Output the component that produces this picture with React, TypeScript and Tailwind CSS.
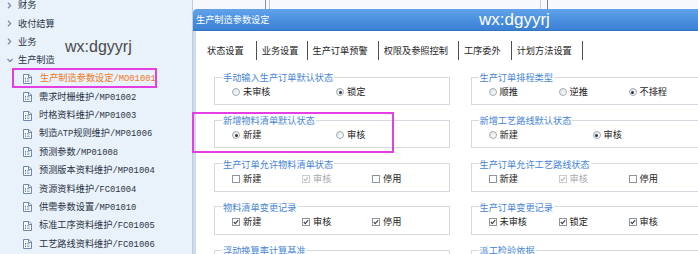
import React from "react";

const cjk = "font-['Noto_Sans_CJK_SC','Liberation_Sans',sans-serif]";

const topNodes = [
  { label: "财务", open: false },
  { label: "收付结算", open: false },
  { label: "业务", open: false },
  { label: "生产制造", open: true },
];

const leafNodes = [
  "生产制造参数设定/MO01001",
  "需求时栅维护/MP01002",
  "时格资料维护/MP01003",
  "制造ATP规则维护/MP01006",
  "预测参数/MP01008",
  "预测版本资料维护/MP01004",
  "资源资料维护/FC01004",
  "供需参数设置/MP01010",
  "标准工序资料维护/FC01005",
  "工艺路线资料维护/FC01006",
];

const tabs = ["状态设置", "业务设置", "生产订单预警", "权限及参照控制", "工序委外", "计划方法设置"];

type Item = { label: string; kind: "radio" | "check"; on?: boolean; disabled?: boolean };
type Group = { title: string; cols: 2 | 3; items: Item[] };

const leftGroups: Group[] = [
  {
    title: "手动输入生产订单默认状态",
    cols: 2,
    items: [
      { label: "未审核", kind: "radio" },
      { label: "锁定", kind: "radio", on: true },
    ],
  },
  {
    title: "新增物料清单默认状态",
    cols: 2,
    items: [
      { label: "新建", kind: "radio", on: true },
      { label: "审核", kind: "radio" },
    ],
  },
  {
    title: "生产订单允许物料清单状态",
    cols: 3,
    items: [
      { label: "新建", kind: "check" },
      { label: "审核", kind: "check", on: true, disabled: true },
      { label: "停用", kind: "check" },
    ],
  },
  {
    title: "物料清单变更记录",
    cols: 3,
    items: [
      { label: "新建", kind: "check", on: true },
      { label: "审核", kind: "check", on: true },
      { label: "停用", kind: "check", on: true },
    ],
  },
  { title: "浮动换算率计算基准", cols: 3, items: [] },
];

const rightGroups: Group[] = [
  {
    title: "生产订单排程类型",
    cols: 3,
    items: [
      { label: "顺推", kind: "radio" },
      { label: "逆推", kind: "radio" },
      { label: "不排程", kind: "radio", on: true },
    ],
  },
  {
    title: "新增工艺路线默认状态",
    cols: 2,
    items: [
      { label: "新建", kind: "radio" },
      { label: "审核", kind: "radio", on: true },
    ],
  },
  {
    title: "生产订单允许工艺路线状态",
    cols: 3,
    items: [
      { label: "新建", kind: "check" },
      { label: "审核", kind: "check", on: true, disabled: true },
      { label: "停用", kind: "check" },
    ],
  },
  {
    title: "生产订单变更记录",
    cols: 3,
    items: [
      { label: "未审核", kind: "check", on: true },
      { label: "锁定", kind: "check", on: true },
      { label: "审核", kind: "check", on: true },
    ],
  },
  { title: "派工检验依据", cols: 3, items: [] },
];

// ascii runs (codes) look like the old half-width font
function MixedText({ text }: { text: string }) {
  const parts = text.split(/([A-Za-z0-9/]+)/).filter(Boolean);
  return (
    <>
      {parts.map((p, i) =>
        /^[A-Za-z0-9/]+$/.test(p) ? (
          <span key={i} className="font-['Liberation_Mono',monospace] text-[8.8px]">
            {p}
          </span>
        ) : (
          <span key={i}>{p}</span>
        )
      )}
    </>
  );
}

function DocIcon() {
  return (
    <svg width="9" height="10" viewBox="0 0 9 10" className="shrink-0">
      <path d="M0.5 0.5h5.5l2.5 2.5v6.5h-8z" fill="#f8fbff" stroke="#7089ab" />
      <path d="M5.5 0.5v3h3" fill="none" stroke="#7089ab" />
      <path d="M2 4.5h1M2 6h1M2 7.5h1" stroke="#6580a6" />
      <path d="M4 4.5h2.5M4 6h2.5M4 7.5h2.5" stroke="#9fb1c9" />
    </svg>
  );
}

function Chevron({ open }: { open: boolean }) {
  return open ? (
    <svg width="6" height="5" viewBox="0 0 6 5">
      <path d="M0.5 1l2.5 2.5L5.5 1" fill="none" stroke="#7b8ea8" strokeWidth="1.3" />
    </svg>
  ) : (
    <svg width="5" height="7" viewBox="0 0 5 7">
      <path d="M1 0.8l2.6 2.7L1 6.2" fill="none" stroke="#7b8ea8" strokeWidth="1.3" />
    </svg>
  );
}

function Radio({ on }: { on?: boolean }) {
  return (
    <span className="w-[8px] h-[8px] rounded-full border border-[#a3a9b0] bg-gradient-to-br from-[#dfe3e7] to-white flex items-center justify-center shrink-0">
      {on && <span className="w-[3px] h-[3px] rounded-full bg-[#2e3640]" />}
    </span>
  );
}

function Check({ on, disabled }: { on?: boolean; disabled?: boolean }) {
  return (
    <span
      className={
        disabled
          ? "w-[8px] h-[8px] border border-[#c9cdd2] bg-white flex items-center justify-center shrink-0"
          : "w-[8px] h-[8px] border border-[#8e959d] bg-white flex items-center justify-center shrink-0"
      }
    >
      {on && (
        <svg width="6" height="6" viewBox="0 0 6 6">
          <path
            d="M0.8 3l1.5 1.6L5.2 1.2"
            fill="none"
            stroke={disabled ? "#b5b9be" : "#3a3f45"}
            strokeWidth="1.1"
          />
        </svg>
      )}
    </span>
  );
}

function GroupBox({ group }: { group: Group }) {
  return (
    <fieldset className="shrink-0 border border-[#d5dae0] pl-[7px] pb-[6px]">
      <legend className="px-[1px] leading-[12px] text-[#4785d6]">{group.title}</legend>
      <div className="flex items-center h-[12px] mt-[3px] pl-[10px]">
        {group.items.map((it, i) => (
          <div
            key={i}
            className={group.cols === 2 ? "w-[104px] flex items-center" : "w-[70px] flex items-center"}
          >
            {it.kind === "radio" ? <Radio on={it.on} /> : <Check on={it.on} disabled={it.disabled} />}
            <span className={it.disabled ? "ml-[3px] text-[#a7a9ac]" : "ml-[3px] text-[#1e1e1e]"}>
              {it.label}
            </span>
          </div>
        ))}
      </div>
    </fieldset>
  );
}

export default function App() {
  return (
    <div className={`relative w-[698px] h-[254px] overflow-hidden flex bg-white text-[9.2px] ${cjk}`}>
      {/* Navigation tree */}
      <aside className="relative w-[193px] h-[254px] shrink-0 bg-[#e9f1fb] border-r border-[#bccde3] overflow-hidden text-[#2b3544]">
        <div className="-mt-[4px]">
          {topNodes.map((n) => (
            <div key={n.label} className="h-[18.4px] flex items-center">
              <span className="w-[18px] pl-[7px] flex items-center">
                <Chevron open={n.open} />
              </span>
              <span>{n.label}</span>
            </div>
          ))}
          {leafNodes.map((t, i) => (
            <div key={t} className="h-[18.4px] flex items-center pl-[23px]">
              <DocIcon />
              <span className={i === 0 ? "ml-[8px] text-[#ec7b23] whitespace-nowrap" : "ml-[7px] whitespace-nowrap"}>
                <MixedText text={t} />
              </span>
            </div>
          ))}
        </div>
        <span className="absolute left-[65px] top-[38px] text-[16px] leading-[18px] text-[#4a4a4a] font-['Liberation_Sans',sans-serif]">
          wx:dgyyrj
        </span>
      </aside>

      {/* Dialog */}
      <div className="w-[505px] h-[254px] shrink-0 flex flex-col overflow-hidden">
        <div className="h-[9px] shrink-0 flex bg-[#f6f8fb]">
          <span className="w-[72px]" />
          <span className="w-px bg-[#8c9096]" />
          <span className="w-[3px]" />
          <span className="w-px bg-[#c3c7cc]" />
          <span className="w-[270px]" />
          <span className="w-px bg-[#c9cdd2]" />
          <span className="w-[6px]" />
          <span className="w-px bg-[#7d8187]" />
        </div>
        <div className="relative h-[22px] shrink-0 rounded-tl-[4px] bg-gradient-to-b from-[#62a3ea] via-[#4b90e0] to-[#3c80d3] border-b border-[#3474c4] flex items-center pl-[3px] text-white">
          生产制造参数设定
          <span className="absolute left-[286px] top-[1px] text-[17px] leading-[20px] text-white font-['Liberation_Sans',sans-serif]">
            wx:dgyyrj
          </span>
        </div>
        <div className="flex-1 shrink-0 bg-white border-l-[3px] border-[#cfdcec]">
          <div className="flex items-center h-[19px] mt-[10px] text-[#1e1e1e]">
            {tabs.map((t, i) => (
              <React.Fragment key={t}>
                <span
                  className={
                    i === 0 ? "pl-[11px] pr-[12px]" : i === 1 ? "pl-[5px] pr-[8px]" : "pl-[5px] pr-[10px]"
                  }
                >
                  {t}
                </span>
                <span className="w-px h-[19px] bg-[#4d4f52]" />
              </React.Fragment>
            ))}
          </div>
          <div className="flex mt-[11px]">
            <div className="ml-[18px] w-[236px] shrink-0 flex flex-col gap-[9.3px]">
              {leftGroups.map((g) => (
                <GroupBox key={g.title} group={g} />
              ))}
            </div>
            <div className="ml-[20.5px] w-[260px] shrink-0 flex flex-col gap-[9.3px]">
              {rightGroups.map((g) => (
                <GroupBox key={g.title} group={g} />
              ))}
            </div>
          </div>
        </div>
      </div>

      {/* annotation boxes */}
      <div className="absolute left-[12px] top-[68px] w-[145px] h-[20px] border-2 border-[#e33fe2]" />
      <div className="absolute left-[192px] top-[112px] w-[202px] h-[41px] border-2 border-[#e33fe2]" />
    </div>
  );
}
